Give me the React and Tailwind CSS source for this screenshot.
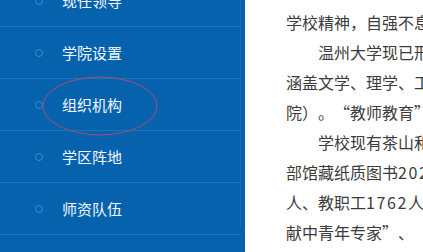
import React from "react";

const menu = ["现任领导", "学院设置", "组织机构", "学区阵地", "师资队伍", "校园风光"];

const lines = [
  { t: "学校精神，自强不息，厚德笃行", indent: false },
  { t: "温州大学现已形成以综合性为特色", indent: true },
  { t: "涵盖文学、理学、工学、经济学", indent: false },
  { t: "院）。“教师教育”、“创业教育”", indent: false },
  { t: "学校现有茶山和学院路两个校区", indent: true },
  { t: "部馆藏纸质图书202万册，电子", indent: false },
  { t: "人、教职工1762人，其中“有突出", indent: false },
  { t: "献中青年专家”、“新世纪百千万", indent: false },
];

function renderLine(t) {
  const out = [];
  let digits = "";
  const flush = (k) => {
    if (digits) {
      out.push(
        <span key={"d" + k} className="tracking-[1.6px]">
          {digits}
        </span>
      );
      digits = "";
    }
  };
  [...t].forEach((c, i) => {
    if (/[0-9]/.test(c)) {
      digits += c;
      return;
    }
    flush(i);
    if (c === "“") {
      out.push(
        <span key={i} className="inline-block w-[16px] text-right">
          {c}
        </span>
      );
    } else if (c === "”") {
      out.push(
        <span key={i} className="inline-block w-[16px] text-left">
          {c}
        </span>
      );
    } else {
      out.push(
        <span key={i} className="inline-block w-[16px]">
          {c}
        </span>
      );
    }
  });
  flush("end");
  return out;
}

export default function App() {
  return (
    <div
      className="relative w-[423px] h-[252px] overflow-hidden bg-white flex"
      style={{ fontFamily: '"Noto Sans CJK SC", "Microsoft YaHei", sans-serif' }}
    >
      <div className="w-[245px] h-full bg-[#0762ae] shrink-0 overflow-hidden">
        <div className="w-[241px] h-full border-r border-[#1a6eb7] mt-[-25px]">
          {menu.map((m) => (
            <div
              key={m}
              className="h-[52px] border-b border-[#1f74bd] flex items-center"
            >
              <span className="ml-[35px] w-[8px] h-[8px] rounded-full border border-[#3f8ad2] shrink-0" />
              <span className="ml-[19px] text-[15px] leading-none text-[#f2f9ff]">{m}</span>
            </div>
          ))}
        </div>
      </div>
      <div className="flex-1 overflow-hidden pt-[7px] pl-[41px]">
        {lines.map((l, i) => (
          <div
            key={i}
            className={`h-[30px] leading-[30px] text-[16px] text-[#3b3b3b] whitespace-nowrap ${l.indent ? "pl-[32px]" : ""}`}
          >
            {renderLine(l.t)}
          </div>
        ))}
      </div>
      <svg className="absolute left-0 top-0 pointer-events-none" width="423" height="252">
        <ellipse cx="100" cy="106" rx="57" ry="29" fill="none" stroke="#a4506f" strokeWidth="1" />
      </svg>
    </div>
  );
}
